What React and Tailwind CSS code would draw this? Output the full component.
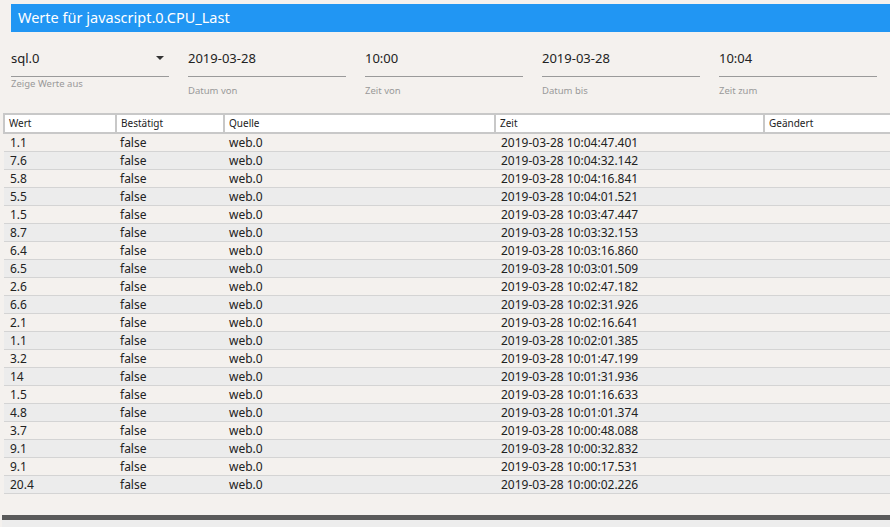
const rows = [
  ["1.1", "2019-03-28 10:04:47.401"],
  ["7.6", "2019-03-28 10:04:32.142"],
  ["5.8", "2019-03-28 10:04:16.841"],
  ["5.5", "2019-03-28 10:04:01.521"],
  ["1.5", "2019-03-28 10:03:47.447"],
  ["8.7", "2019-03-28 10:03:32.153"],
  ["6.4", "2019-03-28 10:03:16.860"],
  ["6.5", "2019-03-28 10:03:01.509"],
  ["2.6", "2019-03-28 10:02:47.182"],
  ["6.6", "2019-03-28 10:02:31.926"],
  ["2.1", "2019-03-28 10:02:16.641"],
  ["1.1", "2019-03-28 10:02:01.385"],
  ["3.2", "2019-03-28 10:01:47.199"],
  ["14", "2019-03-28 10:01:31.936"],
  ["1.5", "2019-03-28 10:01:16.633"],
  ["4.8", "2019-03-28 10:01:01.374"],
  ["3.7", "2019-03-28 10:00:48.088"],
  ["9.1", "2019-03-28 10:00:32.832"],
  ["9.1", "2019-03-28 10:00:17.531"],
  ["20.4", "2019-03-28 10:00:02.226"],
];

const fields = [
  { value: "2019-03-28", label: "Datum von" },
  { value: "10:00", label: "Zeit von" },
  { value: "2019-03-28", label: "Datum bis" },
  { value: "10:04", label: "Zeit zum" },
];

const App = () => {
  return (
    <div className="w-[890px] h-[527px] overflow-hidden bg-[#f4f1ee] flex flex-col text-[#222] font-['Noto_Sans',sans-serif]">
      {/* Title bar */}
      <div className="ml-[11px] mt-[4px] h-[28px] shrink-0 bg-[#2196f3] text-white text-[14.5px] pl-[7px] flex items-center">
        Werte für javascript.0.CPU_Last
      </div>

      {/* Filter row */}
      <div className="flex shrink-0 pl-[11px] pt-[14px] gap-[19px] h-[81px]">
        <div className="w-[158px] flex flex-col">
          <div className="h-[31px] border-b border-[#9a9a9a] flex items-start justify-between text-[13px] pt-[3px] pr-[5px]">
            <span>sql.0</span>
            <svg width="8" height="4" viewBox="0 0 8 4" className="mt-[7px]">
              <path d="M0 0h8L4 4z" fill="#333" />
            </svg>
          </div>
          <span className="text-[9.5px] text-[#999] mt-0">Zeige Werte aus</span>
        </div>
        {fields.map((f, i) => (
          <div key={i} className="w-[158px] flex flex-col">
            <div className="h-[31px] border-b border-[#9a9a9a] flex items-start pt-[3px] text-[13px]">
              {f.value}
            </div>
            <span className="text-[9.5px] text-[#999] mt-[7px]">{f.label}</span>
          </div>
        ))}
      </div>

      {/* Table */}
      <div className="pl-[3px] shrink-0">
        <table className="table-fixed border-collapse w-[900px] text-[12px]">
          <colgroup>
            <col className="w-[112px]" />
            <col className="w-[108px]" />
            <col className="w-[271px]" />
            <col className="w-[269px]" />
            <col />
          </colgroup>
          <thead>
            <tr className="bg-white h-[19px] text-[10px]">
              {["Wert", "Bestätigt", "Quelle", "Zeit", "Geändert"].map((h) => (
                <th key={h} className="border-2 border-[#c8c8c8] font-normal text-left px-[4px] pt-0 pb-[1px] leading-none">
                  {h}
                </th>
              ))}
            </tr>
          </thead>
          <tbody>
            {rows.map(([v, t], i) => (
              <tr
                key={i}
                className={`h-[18px] border-b border-[#d4d4d4] ${i % 2 === 1 ? "bg-[#ececec]" : ""}`}
              >
                <td className="px-[6px] pt-[1px] pb-0 leading-none">{v}</td>
                <td className="px-[4px] pt-[1px] pb-0 leading-none">false</td>
                <td className="px-[5px] pt-[1px] pb-0 leading-none">web.0</td>
                <td className="px-[6px] pt-[1px] pb-0 leading-none">{t}</td>
                <td></td>
              </tr>
            ))}
          </tbody>
        </table>
      </div>

      <div className="flex-1" />
      <div className="ml-[2px] h-[5px] shrink-0 bg-[#5a5a5a]" />
      <div className="ml-[2px] h-[7px] shrink-0 bg-[#ededed]" />
    </div>
  );
};

export default App;
